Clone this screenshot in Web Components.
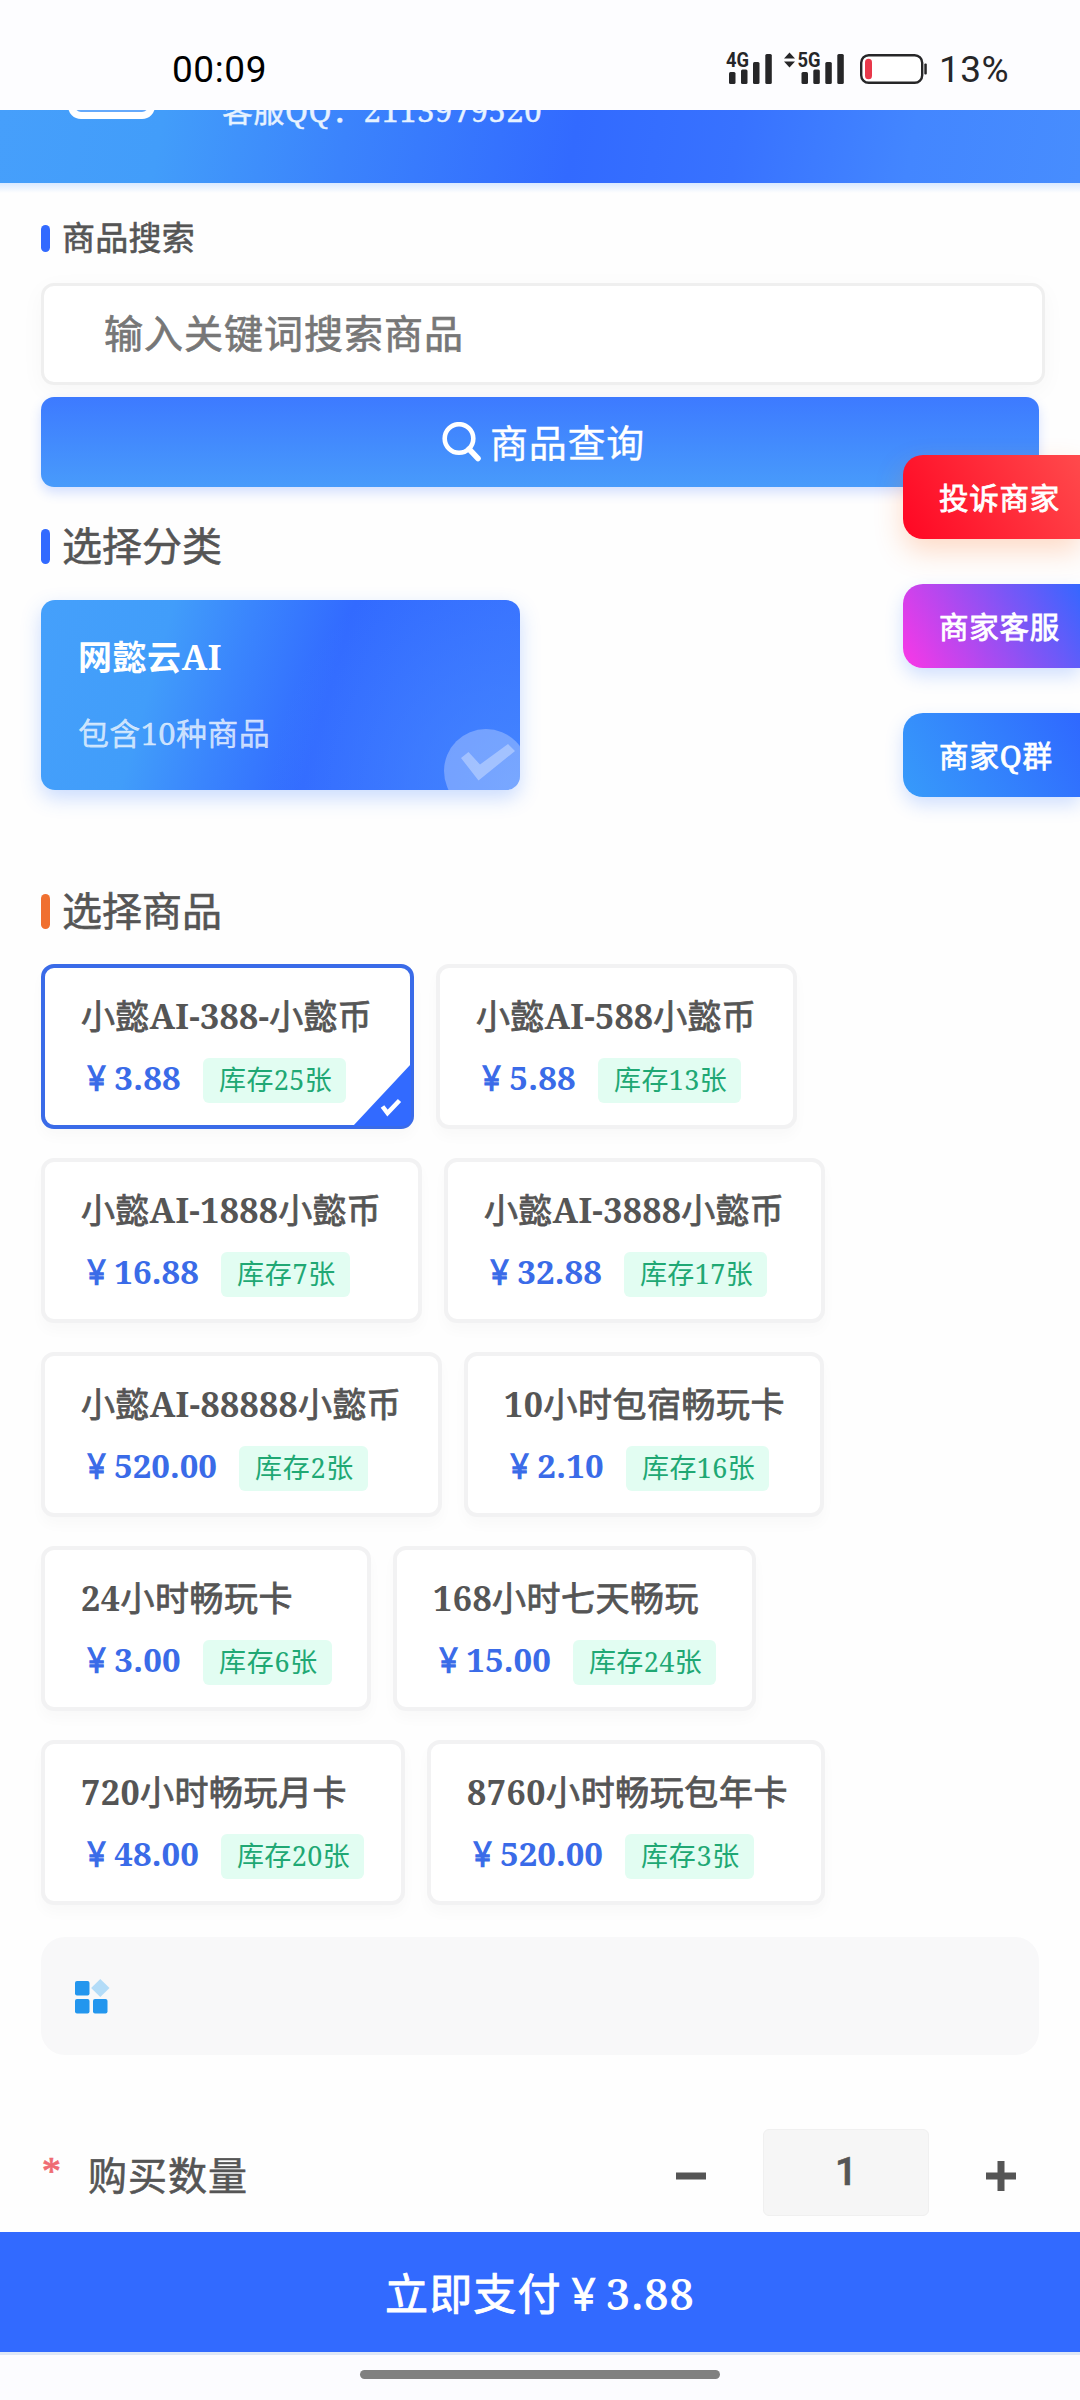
<!DOCTYPE html>
<html lang="zh-CN">
<head>
<meta charset="utf-8">
<meta name="viewport" content="width=device-width">
<title>商品购买</title>
<style>
body{margin:0;background:#fefefe;font-family:"Noto Serif","DejaVu Serif Condensed","Noto Sans CJK SC",serif;color:#555}
</style>
</head>
<body>
<shop-page></shop-page>
<script>
const define = (name, html, after) => customElements.define(name, class extends HTMLElement {
  connectedCallback() {
    if (!this.shadowRoot) {
      const a = n => this.getAttribute(n) || '';
      this.attachShadow({mode: 'open'}).innerHTML = typeof html === 'function' ? html(a) : html;
    }
    if (after) after(this);
  }
});

define('status-bar', `
<style>
:host{display:flex;height:110px;box-sizing:border-box;padding:50px 71px 0 172px;justify-content:space-between;background:#fdfdff;font:400 37px/40px Roboto,sans-serif;color:#000}
.r{display:flex;gap:10px;color:#262628}
svg{display:block;overflow:visible}
</style>
<fit-text w="95">00:09</fit-text>
<div class="r">
<svg width="209" height="50" viewBox="722 44 209 50" style="margin-top:-6px" fill="#262628">
<text x="728" y="67.3" font-family="Roboto" font-weight="700" font-size="20" textLength="23" lengthAdjust="spacingAndGlyphs">4G</text>
<rect x="731" y="72" width="6.5" height="12" rx="1.5"/><rect x="743" y="69.500" width="6.500" height="14.500" rx="1.5"/><rect x="755" y="62" width="6.500" height="22" rx="1.5"/><rect x="767.300" y="54" width="6.500" height="30" rx="1.5"/>
<path d="M786 58.500l5.500-6 5.500 6zM786 61.500h11l-5.500 6z"/>
<text x="799.500" y="67.300" font-family="Roboto" font-weight="700" font-size="20" textLength="23" lengthAdjust="spacingAndGlyphs">5G</text>
<rect x="803.500" y="72" width="6.500" height="12" rx="1.5"/><rect x="815.300" y="69.500" width="6.500" height="14.500" rx="1.5"/><rect x="827.300" y="62" width="6.500" height="22" rx="1.5"/><rect x="839.300" y="54" width="6.500" height="30" rx="1.5"/>
<rect x="863.200" y="55.200" width="61" height="27.600" rx="7.500" fill="#fff" stroke="#262628" stroke-width="2.400"/>
<rect x="867" y="58.700" width="7" height="20.500" rx="3.500" fill="#e8384a"/><rect x="926.300" y="63.500" width="2.500" height="11" rx="1"/>
</svg>
<fit-text w="70">13%</fit-text></div>`);

define('shop-header', `
<style>
:host{display:flex;align-items:flex-start;gap:67px;height:73px;box-sizing:border-box;padding-left:68px;overflow:clip;background:linear-gradient(100deg,#469ffb 0,#429dfa 15%,#3b83fc 32%,#326aff 53%,#3872ff 68%,#4386ff 84%,#478dfe 100%);color:#e6f2ff}
.logo{width:87px;height:86px;margin-top:-77px;border:7px solid #fff;border-radius:13px;box-sizing:border-box;background:#65a9fb}
.qq{font-size:31px;line-height:40px;margin-top:-20px;-webkit-text-stroke:.4px}
</style>
<div class="logo"></div><fit-text class="qq" w="320">客服QQ：2113979520</fit-text>`);

define('section-title', a => `
<style>
:host{display:flex;align-items:center;height:40px;gap:12px;font-size:${a('size')}px;line-height:40px;color:#555;-webkit-text-stroke:.6px}
i{width:9px;height:${a('bar')}px;border-radius:5px;background:${a('tint')}}
</style><i></i><fit-text w="${a('w')}"><slot></slot></fit-text>`);

define('search-box', `
<style>
:host{display:block}
.in{width:1004px;height:102px;box-sizing:border-box;border:3px solid #efefef;border-radius:13px;padding-left:60px;font-size:39px;line-height:94px;color:#777;background:#fff;box-shadow:0 6px 24px rgba(0,0,0,.035);-webkit-text-stroke:.7px}
.btn{display:flex;justify-content:center;gap:9px;height:90px;box-sizing:border-box;padding-left:7px;margin-top:12px;border-radius:13px;background:linear-gradient(#3d7aff,#489bfb);box-shadow:0 6px 12px rgba(50,106,255,.2);font-size:38px;line-height:90px;color:#fff;position:relative;-webkit-text-stroke:.3px}
svg{margin-top:25px}
</style>
<div class="in"><fit-text w="360">输入关键词搜索商品</fit-text></div>
<div class="btn"><svg width="39" height="40" viewBox="0 0 39 40" fill="none" stroke="#fff"><circle cx="17" cy="16.500" r="14.300" stroke-width="4.600"/><path d="M27 27l9 9.500" stroke-width="5.500" stroke-linecap="round"/></svg><fit-text w="155">商品查询</fit-text></div>`);

define('category-card', `
<style>
:host{display:block;position:relative;width:479px;height:190px;box-sizing:border-box;padding:37px 0 0 37px;border-radius:14px;background:radial-gradient(circle at 100% 100%,rgba(75,145,255,.65),rgba(65,125,255,0) 48%),linear-gradient(106deg,#45a0fb 0,#419dfa 25%,#3a85fd 40%,#326aff 59%,#3871ff 100%);box-shadow:0 8px 20px rgba(50,120,255,.26);color:#fff}
b{display:block;font-weight:700;font-size:34px;line-height:40px}
p{margin:36px 0 0;font-size:31px;line-height:40px;color:rgba(255,255,255,.72);-webkit-text-stroke:.3px}
svg{position:absolute;right:0;bottom:0;border-radius:0 0 14px 0}
</style>
<b><fit-text w="144"><slot></slot></fit-text></b><p><fit-text w="192"><slot name="note"></slot></fit-text></p>
<svg width="80" height="64" viewBox="440 726 80 64"><circle cx="486" cy="771" r="42" fill="#fff" opacity=".28"/><path d="M461 758l7.500-6 11.500 12.500 28-20.500 7 7-36.500 29.500z" fill="#fff" opacity=".33"/></svg>`);

define('product-card', a => `
<style>
:host{display:block;position:relative;box-sizing:border-box;width:${a('width')}px;height:165px;border:4px solid #f2f2f3;border-radius:13px;background:#fff;padding:28px 0 0 36px;box-shadow:0 8px 14px rgba(0,0,0,.022)}
:host([selected]){border-color:#3a6be8}
.n{font-size:34px;line-height:40px;-webkit-text-stroke:.8px}
.n b{font-weight:700;-webkit-text-stroke:0}
.r{display:flex;gap:22px;margin-top:22px;line-height:45px}
.p{font-size:33px;font-weight:700;color:#3a6be8;line-height:40px}
.p i{display:inline-block;font-style:normal;font-weight:400;transform:translateX(-1px) scaleX(.82);-webkit-text-stroke:1.5px}
.s{background:#e2fdf2;color:#20a874;border-radius:6px;font-size:27px;line-height:43px;padding:0 14px 0 16px;height:45px}
svg{position:absolute;right:-1px;bottom:-1px;display:none}
:host([selected]) svg{display:block}
</style>
<div class="n"><fit-text w="${a('tw')}">${a('name').replace(/[\w-]+/g, '<b>$&</b>')}</fit-text></div>
<div class="r"><fit-text class="p" w="${a('pw')}"><i>￥</i>${a('price')}</fit-text><fit-text class="s" w="${a('sw')}">${a('stock')}</fit-text></div>
<svg width="58" height="62"><path d="M58 0V53q0 9-9 9H0z" fill="#326aff"/><path d="M29.500 42.500l5 6.500 12-12.500" fill="none" stroke="#fff" stroke-width="4.500"/></svg>`);

define('product-list', `<style>:host{display:flex;flex-direction:column;gap:29px}::slotted(div){display:flex;gap:22px}</style><slot></slot>`);

define('info-panel', `
<style>:host{display:flex;height:118px;box-sizing:border-box;padding:42px 34px;border-radius:24px;background:#f8f8f9}</style>
<svg width="36" height="36"><g fill="#2396ee"><rect y="2" width="14.500" height="14.500" rx="2"/><rect y="20" width="14.500" height="14.500" rx="2"/><rect x="18" y="20" width="14.500" height="14.500" rx="2"/></g><path d="M25.300 0l9.200 9-9.200 9-9.200-9z" fill="#b3dcf8"/></svg>`);

define('quantity-row', `
<style>
:host{display:flex;align-items:center;height:88px;padding-right:23px;-webkit-text-stroke:.6px}
.star{color:#ef6b73;font-size:38px;line-height:38px;width:46px;height:38px;padding-left:1px}
.l{font-size:39px;line-height:40px;flex:1;padding-top:6px}
.box{width:166px;height:87px;box-sizing:border-box;border:1px solid #f0f0f0;border-radius:6px;background:#f6f6f6;font:500 39px/84px Roboto,sans-serif;text-align:center;margin:0 57px}
svg{margin-top:7px}
</style>
<span class="star">*</span><span class="l"><fit-text w="160">购买数量</fit-text></span>
<svg width="30" height="30"><path d="M0 15h30" stroke="#555" stroke-width="7"/></svg>
<span class="box">1</span>
<svg width="30" height="30"><path d="M0 15h30M15 0v30" stroke="#555" stroke-width="7"/></svg>`);

define('pay-bar', `
<style>:host{display:block;height:120px;background:#326aff;border-bottom:3px solid #dfe8f6;text-align:center;color:#fff;font-size:43px;line-height:124px;-webkit-text-stroke:.9px}
::slotted(b){font-weight:600;-webkit-text-stroke:0}
::slotted(i){display:inline-block;font-style:normal;transform:scaleX(.82);-webkit-text-stroke:1.4px}</style>
<fit-text w="310"><slot></slot></fit-text>`);

define('nav-pill', `<style>:host{display:flex;justify-content:center;height:45px;background:#fcfcff}i{width:360px;height:9px;margin-top:15px;border-radius:5px;background:#808080}</style><i></i>`);

define('side-button', a => `
<style>:host{display:block;box-sizing:border-box;width:177px;height:84px;padding-left:36px;border-radius:20px 0 0 20px;background:linear-gradient(60deg,${a('from')},${a('to')});box-shadow:${a('shadow')};color:#fff;font-size:29.500px;line-height:86px;-webkit-text-stroke:.8px}</style>
<fit-text w="${a('w')}"><slot></slot></fit-text>`);

define('shop-page', `
<style>
:host{display:flex;flex-direction:column;position:relative;width:1080px;height:2400px;overflow:hidden}
main{flex:1;padding:35px 41px 0;background:linear-gradient(#d9e9ff,rgba(254,254,254,0)) 0 0/100% 10px no-repeat}
search-box{margin-top:25px}
.t2{margin-top:39px}category-card{margin-top:34px}.t3{margin-top:101px}product-list{margin-top:33px}info-panel{margin-top:32px}quantity-row{margin-top:73px}
aside{position:absolute;right:0;top:455px;display:flex;flex-direction:column;gap:45px}
</style>
<status-bar></status-bar><shop-header></shop-header>
<main>
<section-title size="33" bar="27" tint="#326aff" w="133">商品搜索</section-title>
<search-box></search-box>
<section-title class="t2" size="40" bar="35" tint="#326aff" w="160">选择分类</section-title>
<category-card>网懿云AI<span slot="note">包含10种商品</span></category-card>
<section-title class="t3" size="40" bar="35" tint="#f07030" w="160">选择商品</section-title>
<product-list>
<div><product-card selected width="373" tw="291" price="3.88" pw="100" stock="库存25张" sw="143" name="小懿AI-388-小懿币"></product-card><product-card width="361" tw="280" price="5.88" pw="100" stock="库存13张" sw="143" name="小懿AI-588小懿币"></product-card></div>
<div><product-card width="381" tw="300" price="16.88" pw="118" stock="库存7张" sw="129" name="小懿AI-1888小懿币"></product-card><product-card width="381" tw="300" price="32.88" pw="118" stock="库存17张" sw="143" name="小懿AI-3888小懿币"></product-card></div>
<div><product-card width="401" tw="320" price="520.00" pw="136" stock="库存2张" sw="129" name="小懿AI-88888小懿币"></product-card><product-card width="360" tw="281" price="2.10" pw="100" stock="库存16张" sw="143" name="10小时包宿畅玩卡"></product-card></div>
<div><product-card width="330" tw="212" price="3.00" pw="100" stock="库存6张" sw="129" name="24小时畅玩卡"></product-card><product-card width="363" tw="266" price="15.00" pw="118" stock="库存24张" sw="143" name="168小时七天畅玩"></product-card></div>
<div><product-card width="364" tw="266" price="48.00" pw="118" stock="库存20张" sw="143" name="720小时畅玩月卡"></product-card><product-card width="398" tw="321" price="520.00" pw="136" stock="库存3张" sw="129" name="8760小时畅玩包年卡"></product-card></div>
</product-list>
<info-panel></info-panel>
<quantity-row></quantity-row>
</main>
<pay-bar>立即支付<i>￥</i><b>3.88</b></pay-bar><nav-pill></nav-pill>
<aside>
<side-button w="121" from="#ff0623" to="#ff4a4c" shadow="0 12px 28px rgba(255,110,30,.25)">投诉商家</side-button>
<side-button w="121" from="#fb37e6" to="#3567ff" shadow="0 8px 18px rgba(50,120,255,.22)">商家客服</side-button>
<side-button w="114" from="#379bfa" to="#2f68ff" shadow="0 8px 18px rgba(50,120,255,.22)">商家Q群</side-button>
</aside>`);

/* Spreads a one-line label over the width given in "w" through its tracking. */
define('fit-text', `<style>:host{display:inline-block;white-space:nowrap;box-sizing:border-box}</style><slot></slot>`, el => {
  const w = +el.getAttribute('w');
  const slot = el.shadowRoot.querySelector('slot');
  const text = slot.assignedNodes({flatten: true}).map(n => n.textContent).join('').trim();
  const natural = el.getBoundingClientRect().width;
  if (w && text) el.style.letterSpacing = ((w - natural) / text.length).toFixed(3) + 'px';
});
</script>
</body>
</html>
